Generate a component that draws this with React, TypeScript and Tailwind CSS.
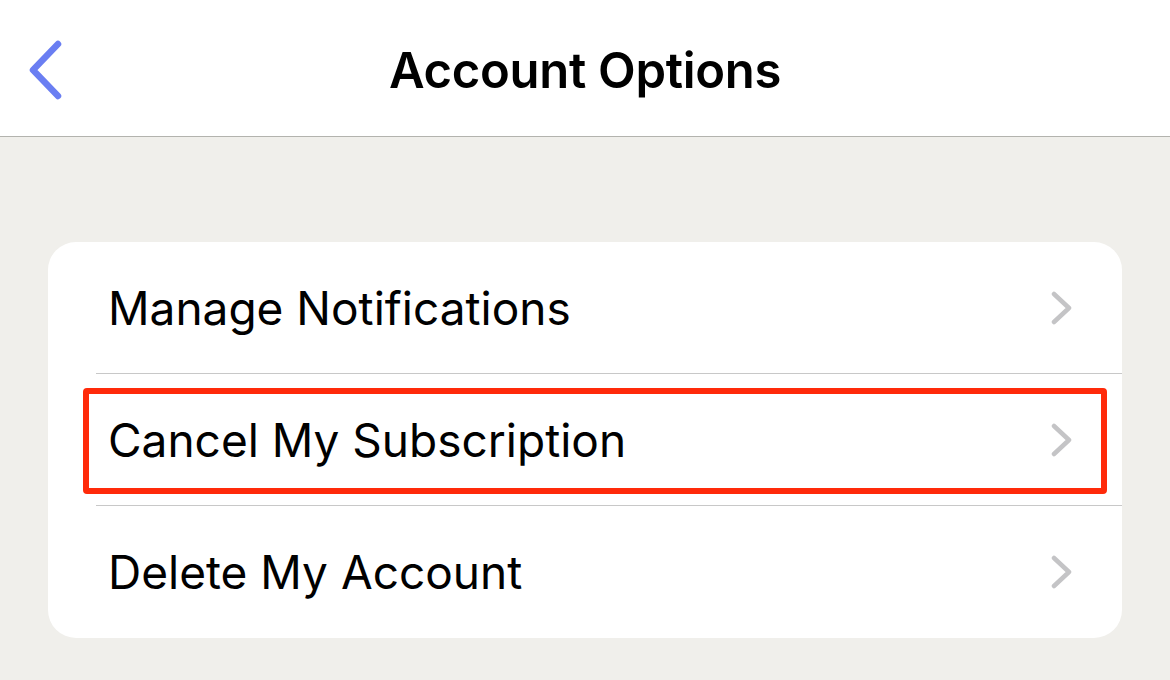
const rows = ["Manage Notifications", "Cancel My Subscription", "Delete My Account"];

export default function App() {
  return (
    <main className="min-h-screen w-[1170px] h-[680px] overflow-hidden bg-[#f0efeb] font-['Inter',sans-serif] text-black">
      {/* Nav bar */}
      <header className="relative flex h-[137px] items-center justify-center border-b border-[#b3b3ae] bg-white pt-[6px]">
        <button className="absolute left-[25px] top-[40px] flex h-[60px] w-[40px] items-center justify-center">
          <svg width="38" height="62" viewBox="0 0 38 62" fill="none">
            <path d="M32 5 L7 31 L32 57" stroke="#6a7ef2" strokeWidth="6.5" strokeLinecap="round" strokeLinejoin="round" />
          </svg>
        </button>
        <h1 className="text-[49px] font-semibold tracking-[-0.3px]">Account Options</h1>
      </header>

      {/* Options card */}
      <div className="px-[48px] pt-[105px]">
        <div className="relative rounded-[28px] bg-white">
          {rows.map((label, i) => (
            <div key={label} className="pl-[48px]">
              <div
                className={
                  "flex h-[132px] items-center justify-between pl-[12px] pr-[49px] " +
                  (i < rows.length - 1 ? "border-b border-[#c8c8c8]" : "")
                }
              >
                <span className="text-[46px] leading-none">{label}</span>
                <svg width="22" height="34" viewBox="0 0 22 34" fill="none">
                  <path d="M3 3 L18 17 L3 31" stroke="#c4c4c6" strokeWidth="4.5" strokeLinecap="round" strokeLinejoin="round" />
                </svg>
              </div>
            </div>
          ))}

          {/* highlight annotation */}
          <div className="pointer-events-none absolute left-[35px] top-[146px] h-[106px] w-[1024px] rounded-[4px] border-[6px] border-[#ff2a0a]" />
        </div>
      </div>
    </main>
  );
}
